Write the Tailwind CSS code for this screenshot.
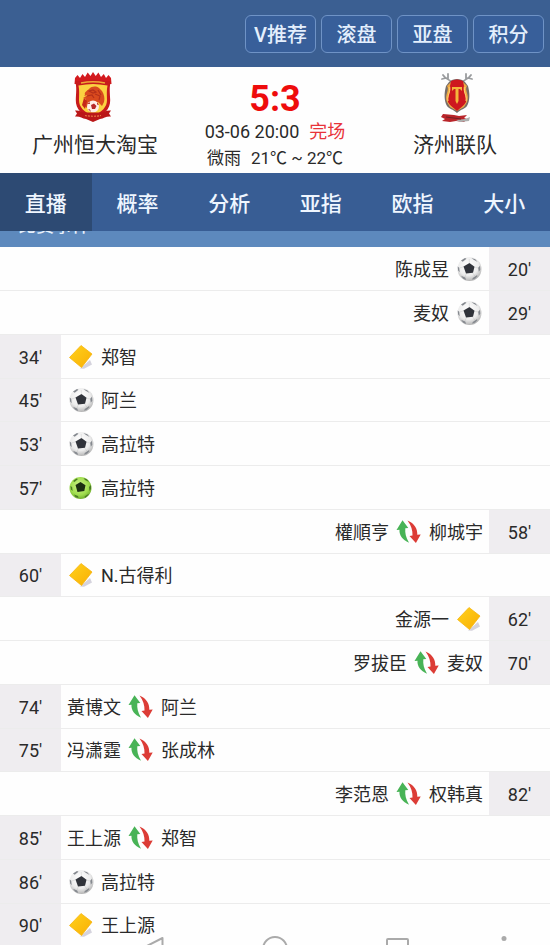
<!DOCTYPE html>
<html lang="zh-CN">
<head>
<meta charset="utf-8">
<meta name="viewport" content="width=device-width, initial-scale=1">
<title>广州恒大淘宝 5:3 济州联队</title>
<script src="https://cdn.jsdelivr.net/npm/@tailwindcss/browser@4"></script>
</head>
<body class="flex h-screen flex-col overflow-hidden bg-[#fefefe] font-[Roboto,'Noto_Sans_CJK_SC',sans-serif] text-lg text-[#2a2a2a]">

<svg class="absolute size-0" aria-hidden="true">
  <defs>
    <radialGradient id="white-ball" cx=".45" cy=".35" r=".65">
      <stop offset="0" stop-color="#fff"/><stop offset=".65" stop-color="#ececec"/><stop offset="1" stop-color="#b4b4b4"/>
    </radialGradient>
    <radialGradient id="green-ball" cx=".45" cy=".4" r=".65">
      <stop offset="0" stop-color="#d0f58c"/><stop offset=".65" stop-color="#9edc4c"/><stop offset="1" stop-color="#65a526"/>
    </radialGradient>
    <linearGradient id="gold" x1="0" y1="0" x2="1" y2="1">
      <stop offset="0" stop-color="#ffd21c"/><stop offset="1" stop-color="#f9ae04"/>
    </linearGradient>
    <symbol id="patches" viewBox="0 0 28 28">
      <path d="M8.500 11.500 14.500 8l5 3.800-1.500 6-7 .7z" fill="#30333a"/>
      <path d="M6 5.500 10 3l1.500.8-3.800 3zM16.500 3l3.800 1.200 2.400 2.800-4-2.200zM2.700 11.500l1.500 1.200.5 4.600-1.600-1.700zM25 10.800l-1.800 2 .6 4 1.500-2zM6 20.800l4.200 1.700 1 2.500-3-1.200zM17.800 23l4-2.800.8.7-2.300 2.600-3.200 1.300z" fill="#85898f"/>
      <path d="M14.500 9 14.200 4M19 12l4.200 1M17.500 17.500l2.300 3.700M11.500 18l-1.500 4M9.500 11.500 4.500 13" fill="none" stroke="#888" stroke-opacity=".3" stroke-width=".6"/>
    </symbol>
    <symbol id="goal" viewBox="0 0 28 28">
      <circle cx="14.500" cy="14" r="12" fill="url(#white-ball)"/><use href="#patches"/>
    </symbol>
    <symbol id="penalty" viewBox="0 0 28 28">
      <circle cx="13.500" cy="14" r="11" fill="url(#green-ball)"/>
      <path d="M8.500 11 13.500 8l5 3.200-1.200 5.800-6.800 1z" fill="#1d2f12"/>
      <path d="M6 7l3.500-2.500 1.500.6L7.500 8zM16.500 4l3.500 1.200L22 8l-4-2zM3.400 12l1.700 1 .5 4-1.700-1.400zM24 11l-2 2 .5 4 1.500-2zM7 20.500l4 1.500.5 2-3-1zM17.500 22.500 21.300 20l.4.8-3.500 3z" fill="#4a7a25"/>
    </symbol>
    <symbol id="card" viewBox="0 0 28 28">
      <path d="M13 25.500 23 17l2 4.500L17 25.800z" fill="#b9b5c6" fill-opacity=".6"/>
      <path d="M2.500 14.500 14 2.500l11 8.500L14.500 24.500z" fill="url(#gold)" stroke="#f6b40c" stroke-width=".8" stroke-linejoin="round"/>
    </symbol>
    <symbol id="swap" viewBox="0 0 28 28">
      <path d="M1.500 12 7.500 2.300l5.800 7.700-3 .2c-.4 5 .5 9 3.700 14.500C7.500 22 4 17 4.500 11.800z" fill="#48b356"/>
      <path d="M12.500 2.500c7 3 10 8 9.800 14.200l3.400-.3-4.800 8.600-6.400-7 3-.4c.2-5.500-1.200-10-5-15.100z" fill="#dc3c36"/>
    </symbol>
  </defs>
</svg>

<header class="shrink-0">
  <nav class="flex h-[67px] items-center justify-end gap-[5px] bg-[#3b5f92] pr-[6px] text-xl font-medium text-[#e4effd]" aria-label="快捷入口">
    <button class="h-[38px] w-[71px] rounded-md border border-[#6f93c6] bg-[#385f9a] pt-[2px]">V推荐</button>
    <button class="h-[38px] w-[71px] rounded-md border border-[#6f93c6] bg-[#385f9a] pt-[2px]">滚盘</button>
    <button class="h-[38px] w-[71px] rounded-md border border-[#6f93c6] bg-[#385f9a] pt-[2px]">亚盘</button>
    <button class="h-[38px] w-[71px] rounded-md border border-[#6f93c6] bg-[#385f9a] pt-[2px]">积分</button>
  </nav>

  <section class="grid h-[106px] grid-cols-[19fr_17fr_19fr] text-center" aria-label="比分">
    <div class="flex flex-col items-center pt-1">
      <svg class="h-[52px] w-[44px]" viewBox="0 0 44 52" role="img" aria-label="广州恒大淘宝队徽">
        <path d="M1.500 13 2 7l2.500-3L7 7l2.500-4L12 6l2.700-4.500L17.500 5 20 1l2.700 4 2.700-3.500L28 6l2.800-3L33 7l2.500-3L38 7l.5 6z" fill="#d31a1e"/>
        <path d="M2 10c5 .5 10-.5 18-1.500C28 9.500 33 10.500 38 10c-2 6-1 12-.8 19 .2 9-6 15-17.200 20C8.800 44 2.600 38 2.800 29 3 22 4 16 2 10z" fill="#c71b1c"/>
        <path d="M5.500 14.500C11 14 15 13 20 13s9 1 14.500 1.500c-1 5-.6 9-.5 14.500.1 7-5 12-14 16C11 41 5.900 36 6 29c.1-5.500.5-9.500-.5-14.500z" fill="#fbd241"/>
        <path d="M8 12c7-1.500 17-1.500 24 0" fill="none" stroke="#f0a934" stroke-width="1.500"/>
        <path d="M12 24c-1-3 2-4 4-6 3-3 7-3 10-1l3 3c2 3 3 7 2 11l-2 4-4-4-3 1c-4 0-7 1-8 5l-4-3 3-6-3-1 5-3-4 1z" fill="#d94a1e"/>
        <path d="M16 20l4-1 3 2-3 1zM22 23l5 2-1 4M14 25l5-1 2 3M25 19l3 5" fill="none" stroke="#b5301a" stroke-width="1.200"/>
        <path d="M11 27l-2 7 3 4 2-8z" fill="#c62719"/>
        <circle cx="20" cy="35.500" r="6" fill="#fff0e8"/>
        <path d="M18 34l3-1.500 2.500 2.500-1.500 3h-3zM14.500 33l2-2 .5 2zM24 31l2 3-2-.5zM15 38l2 .5 1 2.500z" fill="#b72a28"/>
        <path d="M2 39.500c5-.5 7 2 10 2h16c3 0 5-2.500 10-2l-2 3 2 3c-5-.5-7 2-11 2.500L20 51l-7-3c-4-.5-6-3-11-2.500l2-3z" fill="#ba1718"/>
        <path d="M12 44.500c5 1 11 1 16 0" fill="none" stroke="#e97a43" stroke-width="1.200" stroke-dasharray="2 1"/>
      </svg>
      <h2 class="mt-[5px] text-[21px] leading-[34px]">广州恒大淘宝</h2>
    </div>

    <div class="flex flex-col items-center whitespace-nowrap pt-3">
      <p class="text-4xl leading-10 font-bold text-[#ee0c0c]">5:3</p>
      <p class="leading-[26px]">03-06 20:00<span class="ml-[10px] text-[#e8343a]">完场</span></p>
      <p class="text-[17px] leading-[26px]">微雨<span class="ml-[10px]">21℃ ~ 22℃</span></p>
    </div>

    <div class="flex flex-col items-center pt-1">
      <svg class="h-[52px] w-[36px]" viewBox="-4 0 36 52" role="img" aria-label="济州联队队徽">
        <path d="M11 12C8 7 5 9 2 4M7 8 7 3M5 7 1 8M21 12c3-5 6-3 9-8M25 8l0-5M27 7l4 1" fill="none" stroke="#9a9c9e" stroke-width="1.800" stroke-linecap="round"/>
        <path d="M8 11c4-4 12-4 16 0l3 4c2 7 2 15-1 20-2 3-6 3-10 7-4-4-8-4-10-7C3 30 3 22 5 15z" fill="#776d68"/>
        <path d="M6 15c3 4-3 9 0 16l3 5 7 4 7-4 3-5c3-7-3-12 0-16l-4-4H10z" fill="#efaa43"/>
        <path d="M10 10c4-2 8-2 12 0l1 5c-2 5 3 9 2 16-2 4-5 5-9 9-4-4-7-5-9-9-1-7 4-11 2-16z" fill="#ce171f"/>
        <path d="M8 16c2 5-2 8-1 14M24 16c-2 5 2 8 1 14" fill="none" stroke="#ffd276" stroke-width="1"/>
        <path d="M11 16h10v4l-2-2h-1.500v12L16 33l-1.500-3V18H13l-2 2z" fill="#f5b43b"/>
        <path d="M2 43l11 1 5 1 8-1-3 3 3 1-3 3-8-1-6 1-8-1 3-2-4-2z" fill="#b9252a"/>
        <path d="M15 49l9-1 5-2-1 4-9 1z" fill="#adb0af"/>
        <path d="M5 46l15 2" stroke="#702126" stroke-width="1.200"/>
      </svg>
      <h2 class="mt-[5px] text-[21px] leading-[34px]">济州联队</h2>
    </div>
  </section>

  <nav class="grid h-[58px] grid-cols-6 bg-[#385d94] text-center text-[21px] leading-[62px] font-medium text-[#eff6ff]" aria-label="比赛数据">
    <a href="#live" class="h-[58px] bg-[#2d4a73]" aria-current="page">直播</a>
    <a href="#odds">概率</a>
    <a href="#analysis">分析</a>
    <a href="#asian">亚指</a>
    <a href="#euro">欧指</a>
    <a href="#total">大小</a>
  </nav>
</header>

<main class="min-h-0 flex-1 overflow-hidden">
  <div class="flex h-4 items-end overflow-hidden bg-[#5d89bd] pl-[18px] text-[#e6f0fb]">
    <h3 class="shrink-0 leading-[42px] font-medium">比赛事件</h3>
  </div>

  <ol class="[&>li]:flex [&>li]:h-11 [&>li]:items-center [&>li]:gap-[6px] [&>li]:border-b [&>li]:border-[#ececec] [&>li:nth-child(4n)]:h-[43px] [&_span]:pt-[2px] [&_svg]:size-7 [&_svg]:shrink-0 [&_time]:flex [&_time]:w-[61px] [&_time]:shrink-0 [&_time]:items-center [&_time]:justify-center [&_time]:self-stretch [&_time]:bg-[#efedf0] [&_time]:pt-[2px]">
    <li class="justify-end"><span>陈成昱</span><svg role="img" aria-label="进球"><use href="#goal"/></svg><time>20'</time></li>
    <li class="justify-end"><span>麦奴</span><svg role="img" aria-label="进球"><use href="#goal"/></svg><time>29'</time></li>
    <li><time>34'</time><svg role="img" aria-label="黄牌"><use href="#card"/></svg><span>郑智</span></li>
    <li><time>45'</time><svg role="img" aria-label="进球"><use href="#goal"/></svg><span>阿兰</span></li>
    <li><time>53'</time><svg role="img" aria-label="进球"><use href="#goal"/></svg><span>高拉特</span></li>
    <li><time>57'</time><svg role="img" aria-label="点球"><use href="#penalty"/></svg><span>高拉特</span></li>
    <li class="justify-end"><span>權順亨</span><svg role="img" aria-label="换人"><use href="#swap"/></svg><span>柳城宇</span><time>58'</time></li>
    <li><time>60'</time><svg role="img" aria-label="黄牌"><use href="#card"/></svg><span>N.古得利</span></li>
    <li class="justify-end"><span>金源一</span><svg role="img" aria-label="黄牌"><use href="#card"/></svg><time>62'</time></li>
    <li class="justify-end"><span>罗拔臣</span><svg role="img" aria-label="换人"><use href="#swap"/></svg><span>麦奴</span><time>70'</time></li>
    <li><time>74'</time><span>黃博文</span><svg role="img" aria-label="换人"><use href="#swap"/></svg><span>阿兰</span></li>
    <li><time>75'</time><span>冯潇霆</span><svg role="img" aria-label="换人"><use href="#swap"/></svg><span>张成林</span></li>
    <li class="justify-end"><span>李范恩</span><svg role="img" aria-label="换人"><use href="#swap"/></svg><span>权韩真</span><time>82'</time></li>
    <li><time>85'</time><span>王上源</span><svg role="img" aria-label="换人"><use href="#swap"/></svg><span>郑智</span></li>
    <li><time>86'</time><svg role="img" aria-label="进球"><use href="#goal"/></svg><span>高拉特</span></li>
    <li><time>90'</time><svg role="img" aria-label="黄牌"><use href="#card"/></svg><span>王上源</span></li>
  </ol>
</main>

<!-- System navigation keys, peeking over the bottom edge -->
<div class="pointer-events-none fixed inset-x-0 bottom-0 h-[10px] overflow-hidden" aria-hidden="true">
  <svg class="h-[30px] w-full" viewBox="0 0 550 30" preserveAspectRatio="xMidYMin meet" fill="none" stroke="#aaa" stroke-width="2">
    <path d="M162.500 3v22L141 14z" stroke-linejoin="round"/>
    <circle cx="275" cy="14" r="12"/>
    <rect x="387" y="4" width="21" height="21" rx="1"/>
    <circle cx="504" cy="3.500" r="2.500" fill="#aaa" stroke="none"/>
  </svg>
</div>
</body>
</html>
